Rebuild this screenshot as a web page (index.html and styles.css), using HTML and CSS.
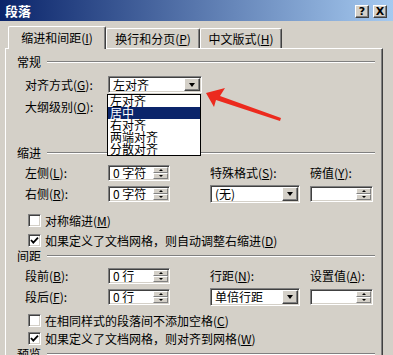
FILE: index.html
```html
<!DOCTYPE html>
<html lang="zh-CN">
<head>
    <meta charset="utf-8" />
    <title>段落</title>
    <link rel="stylesheet" href="styles.css">
</head>
<body>
    <div class="dialog">
        <div class="titlebar">
            <span class="title">段落</span>
            <div class="title-btns">
                <span class="tbtn">?</span>
                <span class="tbtn">X</span>
            </div>
        </div>

        <div class="tabs">
            <div class="tab active tab-1">缩进和间距(<u>I</u>)</div>
            <div class="tab tab-2">换行和分页(<u>P</u>)</div>
            <div class="tab tab-3">中文版式(<u>H</u>)</div>
        </div>

        <div class="panel">
            <!-- 常规 -->
            <div class="group-head">常规</div>
            <div class="row first">
                <span class="lbl">对齐方式(<u>G</u>):</span>
                <div class="field select w-align"><span>左对齐</span><b class="drop"></b></div>
            </div>
            <div class="row">
                <span class="lbl">大纲级别(<u>O</u>):</span>
            </div>

            <!-- 缩进 -->
            <div class="group-head indent-head">缩进</div>
            <div class="grid">
                <span class="lbl">左侧(<u>L</u>):</span>
                <div class="field spin"><span>0 字符</span><span class="spin-btns"><i></i><i></i></span></div>
                <span></span>
                <span class="lbl">特殊格式(<u>S</u>):</span>
                <span></span>
                <span class="lbl">磅值(<u>Y</u>):</span>

                <span class="lbl">右侧(<u>R</u>):</span>
                <div class="field spin"><span>0 字符</span><span class="spin-btns"><i></i><i></i></span></div>
                <span></span>
                <div class="field select"><span>(无)</span><b class="drop"></b></div>
                <span></span>
                <div class="field spin"><span></span><span class="spin-btns"><i></i><i></i></span></div>
            </div>
            <div class="check cb-1">
                <span class="box"></span>
                <span>对称缩进(<u>M</u>)</span>
            </div>
            <div class="check cb-2">
                <span class="box"><svg viewBox="0 0 11 11" width="11" height="11"><path d="M2 5 L4.3 7.6 L9 2.6" fill="none" stroke="#000" stroke-width="1.8"/></svg></span>
                <span>如果定义了文档网格，则自动调整右缩进(<u>D</u>)</span>
            </div>

            <!-- 间距 -->
            <div class="group-head spacing-head">间距</div>
            <div class="grid">
                <span class="lbl">段前(<u>B</u>):</span>
                <div class="field spin"><span>0 行</span><span class="spin-btns"><i></i><i></i></span></div>
                <span></span>
                <span class="lbl">行距(<u>N</u>):</span>
                <span></span>
                <span class="lbl">设置值(<u>A</u>):</span>

                <span class="lbl">段后(<u>F</u>):</span>
                <div class="field spin"><span>0 行</span><span class="spin-btns"><i></i><i></i></span></div>
                <span></span>
                <div class="field select"><span>单倍行距</span><b class="drop"></b></div>
                <span></span>
                <div class="field spin"><span></span><span class="spin-btns"><i></i><i></i></span></div>
            </div>
            <div class="check cb-3">
                <span class="box"></span>
                <span>在相同样式的段落间不添加空格(<u>C</u>)</span>
            </div>
            <div class="check cb-4">
                <span class="box"><svg viewBox="0 0 11 11" width="11" height="11"><path d="M2 5 L4.3 7.6 L9 2.6" fill="none" stroke="#000" stroke-width="1.8"/></svg></span>
                <span>如果定义了文档网格，则对齐到网格(<u>W</u>)</span>
            </div>

            <div class="group-head preview-head">预览</div>
        </div>

        <!-- open list of 对齐方式 -->
        <ul class="dropdown">
            <li>左对齐</li>
            <li class="selected">居中</li>
            <li>右对齐</li>
            <li>两端对齐</li>
            <li>分散对齐</li>
        </ul>

        <svg class="arrow" width="393" height="355" viewBox="0 0 393 355">
            <polygon points="206,93 225,88 220,96 281,118 280,121 216,100 214,107" fill="#ec2a1e"/>
        </svg>
    </div>
</body>
</html>
```

FILE: styles.css
```css
* {
    box-sizing: border-box;
}
body {
    margin: 0;
    width: 393px;
    height: 355px;
    overflow: hidden;
    background: #d4d0c8;
    font-family: "Noto Sans CJK SC", "Noto Sans", sans-serif;
    font-size: 12px;
    line-height: 14px;
    color: #000;
}
u {
    text-decoration: underline;
    text-underline-offset: 1px;
}
.dialog {
    position: relative;
    height: 355px;
}

/* title bar */
.titlebar {
    height: 21px;
    display: flex;
    align-items: center;
    justify-content: space-between;
    padding: 0 6px 0 5px;
    background: linear-gradient(to right, #0a246a, #a6caf0);
}
.title {
    color: #fff;
    font-weight: bold;
    font-size: 13px;
}
.title-btns {
    display: flex;
    gap: 4px;
    margin-top: 1px;
}
.tbtn {
    width: 14px;
    height: 13px;
    background: #d4d0c8;
    border: 1px solid;
    border-color: #fff #404040 #404040 #fff;
    box-shadow: inset -1px -1px 0 #808080;
    font: bold 11px/11px "DejaVu Sans", sans-serif;
    text-align: center;
}

/* tabs */
.tabs {
    display: flex;
    align-items: flex-end;
    height: 22px;
    margin-top: 5px;
    padding-left: 8px;
}
.tab {
    height: 20px;
    padding-top: 3px;
    border: 1px solid;
    border-bottom: none;
    border-color: #fff #404040 #fff #fff;
    box-shadow: inset -1px 0 0 #808080;
    border-radius: 2px 2px 0 0;
    text-align: center;
}
.tab.active {
    height: 23px;
    padding-top: 4px;
    margin-bottom: -1px;
    position: relative;
    z-index: 1;
    background: #d4d0c8;
}
.tab-1 { width: 98px; }
.tab-2 { width: 94px; }
.tab-3 { width: 82px; }

/* panel */
.panel {
    margin: 0 10px 0 5px;
    height: 320px;
    border: 1px solid;
    border-color: #fff #404040 #404040 #fff;
    box-shadow: inset -1px -1px 0 #808080;
    padding: 6px 7px 0 11px;
}
.group-head {
    display: flex;
    align-items: center;
    gap: 6px;
    height: 14px;
}
.group-head::after {
    content: "";
    flex: 1;
    border-top: 1px solid #808080;
    border-bottom: 1px solid #fff;
}
.indent-head { margin-top: 31px; }
.spacing-head { margin-top: 2px; }
.preview-head { margin-top: 2px; }

.row {
    display: flex;
    align-items: center;
    height: 17px;
    margin: 5px 0 0 8px;
}
.row.first { margin-top: 7px; }
.row .lbl { width: 83px; }

.grid {
    display: grid;
    grid-template-columns: 83px 62px 40px 90px 10px 63px;
    grid-template-rows: 16px 18px;
    row-gap: 4px;
    align-items: center;
    margin: 5px 0 0 8px;
}

/* sunken fields */
.field {
    display: flex;
    align-items: center;
    height: 16px;
    padding: 0 1px 0 4px;
    background: #fff;
    border: 1px solid;
    border-color: #808080 #fff #fff #808080;
    box-shadow: inset 1px 1px 0 #404040, inset -1px -1px 0 #d4d0c8;
    white-space: nowrap;
}
.select {
    height: 18px;
}
.w-align {
    width: 94px;
    height: 17px;
}
.drop {
    margin-left: auto;
    width: 16px;
    height: calc(100% - 2px);
    display: flex;
    align-items: center;
    justify-content: center;
    background: #d4d0c8;
    border: 1px solid;
    border-color: #fff #404040 #404040 #fff;
    box-shadow: inset -1px -1px 0 #808080;
}
.drop::after {
    content: "";
    border-left: 3.5px solid transparent;
    border-right: 3.5px solid transparent;
    border-top: 4px solid #000;
}
.spin-btns {
    margin-left: auto;
    width: 15px;
    height: calc(100% - 2px);
    display: flex;
    flex-direction: column;
}
.spin-btns i {
    flex: 1;
    display: flex;
    align-items: center;
    justify-content: center;
    background: #d4d0c8;
    border: 1px solid;
    border-color: #fff #808080 #808080 #fff;
}
.spin-btns i::after {
    content: "";
    border-left: 2px solid transparent;
    border-right: 2px solid transparent;
    border-bottom: 2px solid #000;
}
.spin-btns i + i::after {
    border-bottom: none;
    border-top: 2px solid #000;
}

/* checkboxes */
.check {
    display: flex;
    align-items: center;
    gap: 4px;
    height: 13px;
    margin-left: 11px;
    white-space: nowrap;
}
.cb-1 { margin-top: 11px; }
.cb-2 { margin-top: 7px; }
.cb-3 { margin-top: 8px; }
.cb-4 { margin-top: 5px; }
.box {
    width: 13px;
    height: 13px;
    flex: none;
    display: flex;
    align-items: center;
    justify-content: center;
    background: #fff;
    border: 1px solid;
    border-color: #808080 #fff #fff #808080;
    box-shadow: inset 1px 1px 0 #404040, inset -1px -1px 0 #d4d0c8;
}

/* open dropdown list */
.dropdown {
    position: absolute;
    left: 107px;
    top: 94px;
    width: 94px;
    height: 62px;
    margin: 0;
    padding: 0;
    list-style: none;
    background: #fff;
    border: 1px solid #000;
    z-index: 2;
}
.dropdown li {
    height: 12px;
    line-height: 12px;
    padding-left: 2px;
    overflow: visible;
}
.dropdown li.selected {
    background: #0a246a;
    color: #fff;
}

.arrow {
    position: absolute;
    left: 0;
    top: 0;
    pointer-events: none;
    z-index: 3;
}
```
